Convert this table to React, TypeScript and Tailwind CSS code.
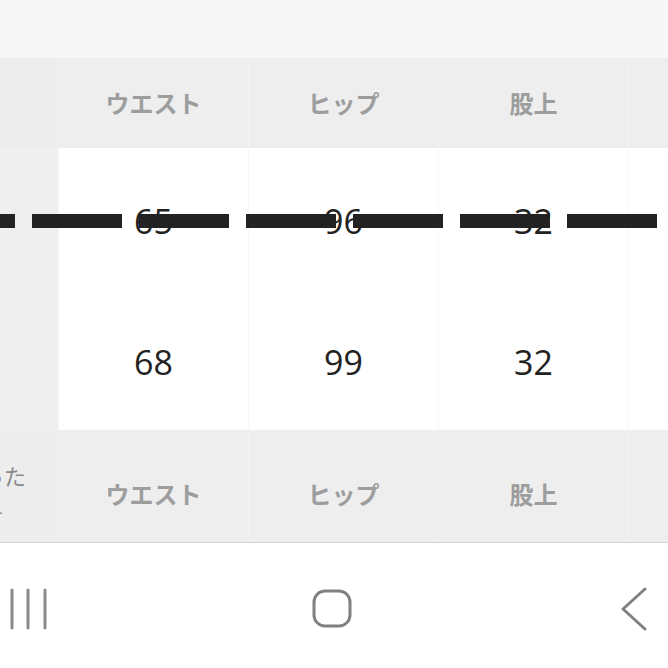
import React from 'react';

const cols = ['ウエスト', 'ヒップ', '股上'];
const rows = [
  ['65', '96', '32'],
  ['68', '99', '32'],
];

function HeaderRow({ tall }: { tall?: boolean }) {
  return (
    <>
      <div className={`bg-[#ededed] overflow-hidden ${tall ? 'h-[112px]' : 'h-[90px]'}`}>
        {tall && (
          <div className="w-[200px] -ml-[106px] pt-[24px] text-[22px] leading-[42px] text-[#8a8a8a] font-['Noto_Sans_CJK_JP',sans-serif]">
            <div>実寸を測った</div>
            <div>サイズです</div>
          </div>
        )}
      </div>
      {cols.map((c) => (
        <div
          key={c}
          className={`flex justify-center bg-[#eeeeee] border-l border-[#f2f2f2] text-[24px] font-bold text-[#9d9d9d] font-['Noto_Sans_CJK_JP',sans-serif] ${
            tall ? 'h-[112px] items-center pt-[16px]' : 'h-[90px] items-center'
          }`}
        >
          {c}
        </div>
      ))}
      <div className={`bg-[#eeeeee] border-l border-[#f2f2f2] ${tall ? 'h-[112px]' : 'h-[90px]'}`} />
    </>
  );
}

export default function App() {
  return (
    <div className="relative w-[668px] h-[668px] overflow-hidden bg-white">
      {/* top strip */}
      <div className="h-[58px] bg-[#f7f7f7]" />

      {/* size table */}
      <div className="grid grid-cols-[58px_190px_190px_190px_40px]">
        <HeaderRow />
        {rows.map((r, i) => (
          <React.Fragment key={i}>
            <div className="h-[141px] bg-[#efefef]" />
            {r.map((v, j) => (
              <div
                key={j}
                className="h-[141px] flex items-center justify-center pt-[5px] bg-white border-l border-[#f6f6f6] text-[34px] text-[#222222] font-['Open_Sans',sans-serif]"
              >
                {v}
              </div>
            ))}
            <div className="h-[141px] bg-white border-l border-[#f6f6f6]" />
          </React.Fragment>
        ))}
        <HeaderRow tall />
      </div>
      <div className="h-px bg-[#d2d2d2]" />

      {/* android nav bar */}
      <div className="h-[125px] flex items-center justify-between pl-[9px] pr-[20px] pt-[6px] bg-white">
        <svg width="40" height="42" viewBox="0 0 40 42" fill="none" stroke="#8a8a8a" strokeWidth="3" strokeLinecap="round">
          <line x1="3" y1="2" x2="3" y2="40" />
          <line x1="19" y1="2" x2="19" y2="40" />
          <line x1="36" y1="2" x2="36" y2="40" />
        </svg>
        <svg width="40" height="40" viewBox="0 0 40 40" fill="none" stroke="#808080" strokeWidth="3" className="-ml-[6px]">
          <rect x="2" y="2" width="36" height="35" rx="11" />
        </svg>
        <svg width="28" height="44" viewBox="0 0 28 44" fill="none" stroke="#808080" strokeWidth="3" strokeLinecap="round" strokeLinejoin="round">
          <polyline points="25,2 3,22 25,42" />
        </svg>
      </div>

      {/* dashed strike line over first row */}
      <div className="absolute left-[-75px] top-[214px] flex gap-[17px]">
        {Array.from({ length: 7 }).map((_, i) => (
          <div key={i} className="w-[90px] h-[14px] bg-[#222222]" />
        ))}
      </div>
    </div>
  );
}
